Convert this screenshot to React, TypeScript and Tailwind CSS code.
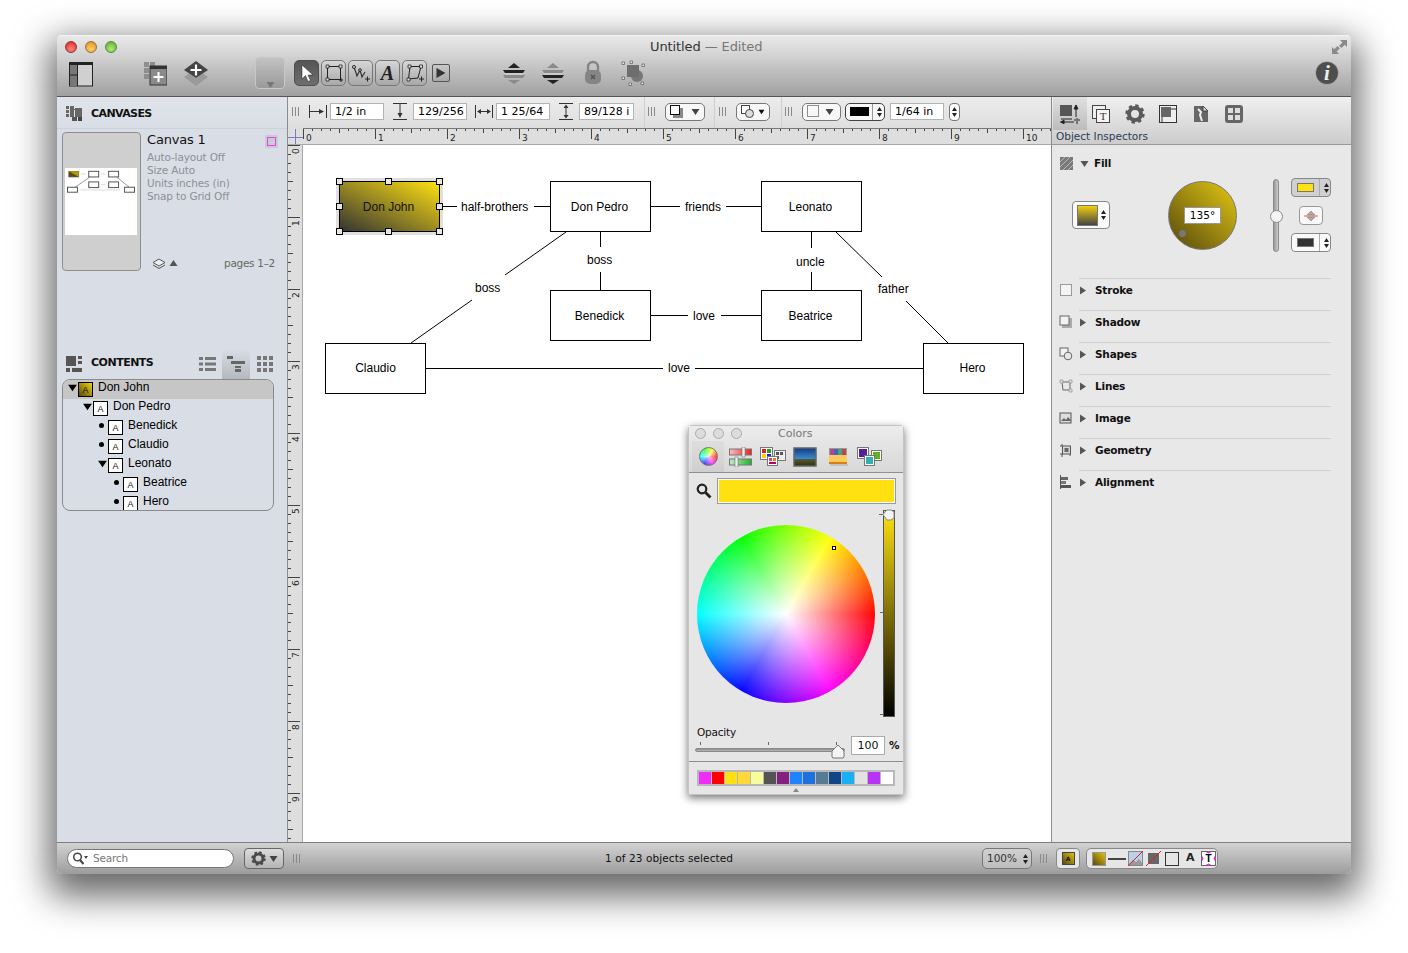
import React from "react";

const ui = "font-['DejaVu_Sans',sans-serif]";
const hv = "font-['Liberation_Sans',sans-serif]";

const Grip = ({ c = "" }: { c?: string }) => (
  <div className={`flex gap-[2px] h-[9px] ${c}`}>
    <i className="block w-px h-full bg-[#8a8a8a]" />
    <i className="block w-px h-full bg-[#8a8a8a]" />
    <i className="block w-px h-full bg-[#8a8a8a]" />
  </div>
);

const Field = ({ t, c = "" }: { t: string; c?: string }) => (
  <div className={`h-[17px] bg-white border border-[#b4b4b4] pl-[4px] text-[11px] leading-[15px] text-black overflow-hidden whitespace-nowrap ${c}`}>{t}</div>
);

const Tri = ({ c = "", d = "down", f = "#444" }: { c?: string; d?: "down" | "right" | "up"; f?: string }) => (
  <svg width="9" height="9" viewBox="0 0 9 9" className={`shrink-0 ${c}`}>
    <path d={d === "down" ? "M0.5 2h8l-4 6z" : d === "right" ? "M2 0.5v8l6-4z" : "M0.5 7h8l-4-6z"} fill={f} />
  </svg>
);

const Stepper = ({ c = "" }: { c?: string }) => (
  <svg width="7" height="12" viewBox="0 0 7 12" className={c}>
    <path d="M3.5 1l2.5 4h-5zM3.5 11l2.5-4h-5z" fill="#222" />
  </svg>
);

const Gear = ({ s = 16, f = "#4a4a4a" }: { s?: number; f?: string }) => (
  <svg width={s} height={s} viewBox="0 0 20 20">
    <circle cx="10" cy="10" r="8" fill="none" stroke={f} strokeWidth="3.4" strokeDasharray="3.2 3.08" />
    <circle cx="10" cy="10" r="6" fill="none" stroke={f} strokeWidth="4" />
  </svg>
);

const ToolBtn = ({ on, children }: { on?: boolean; children: React.ReactNode }) => (
  <div className={`w-[25px] h-[26px] rounded-[5px] border flex items-center justify-center ${on ? "border-[#4e4e4e] bg-[linear-gradient(#555,#6e6e6e)]" : "border-[#777] bg-[linear-gradient(#d6d6d6,#a8a8a8)]"}`}>
    {children}
  </div>
);

const Node = ({ t, c }: { t: string; c: string }) => (
  <div className={`absolute w-[101px] h-[51px] bg-white border border-black flex items-center justify-center pr-[2px] text-[12px] text-black ${c}`}>{t}</div>
);

const Lbl = ({ t, c }: { t: string; c: string }) => (
  <div className={`absolute text-[12px] leading-[14px] text-black whitespace-nowrap ${c}`}>{t}</div>
);

const Handle = ({ c }: { c: string }) => (
  <i className={`absolute block w-[7px] h-[7px] bg-[#e8e8e0] border border-black ${c}`} />
);

const TreeIcon = ({ on }: { on?: boolean }) => (
  <div className={`w-[15px] h-[15px] mt-[2px] border border-black flex items-center justify-center text-[9px] leading-none ${on ? "bg-[linear-gradient(to_top_right,#5a4a10,#f0d010)]" : "bg-white"}`}>
    <span className="mt-[2px]">A</span>
  </div>
);

const rows = [
  { t: "Don John", p: "pl-[4px]", k: "tri", on: true },
  { t: "Don Pedro", p: "pl-[19px]", k: "tri" },
  { t: "Benedick", p: "pl-[34px]", k: "dot" },
  { t: "Claudio", p: "pl-[34px]", k: "dot" },
  { t: "Leonato", p: "pl-[34px]", k: "tri" },
  { t: "Beatrice", p: "pl-[49px]", k: "dot" },
  { t: "Hero", p: "pl-[49px]", k: "dot" },
];

const sections: { t: string; i: React.ReactNode }[] = [
  { t: "Stroke", i: <rect x="1.5" y="1.5" width="11" height="11" fill="#f4f4f4" stroke="#444" strokeDasharray="1 1" /> },
  { t: "Shadow", i: <><rect x="3" y="3" width="10" height="10" fill="#aaa" /><rect x="1" y="1" width="9" height="9" fill="#f2f2f2" stroke="#666" /></> },
  { t: "Shapes", i: <><rect x="1" y="1" width="8" height="8" fill="#f2f2f2" stroke="#666" /><circle cx="9" cy="9" r="3.8" fill="#e8e8e8" stroke="#666" /></> },
  { t: "Lines", i: <><path d="M3 3h8v8H4z" fill="none" stroke="#666" /><path d="M1 1h3v3H1zM10 1h3v3h-3zM10 10h3v3h-3z" fill="#ddd" stroke="#888" strokeWidth=".6" /></> },
  { t: "Image", i: <><rect x="1" y="2" width="11" height="10" fill="#ddd" stroke="#555" /><path d="M2 10l3-3 2 2 2-3 3 3v1H2z" fill="#666" /></> },
  { t: "Geometry", i: <><rect x="3.5" y="3" width="8" height="8" fill="#d8d8d8" stroke="#555" /><rect x="5.5" y="5" width="4" height="4" fill="#666" /><path d="M1 3h2M3 1v2M1 11h3M3 11v3M11 11v2" stroke="#555" fill="none" /></> },
  { t: "Alignment", i: <><path d="M1.5 0v14" stroke="#555" /><rect x="2" y="2" width="7" height="3" fill="#666" /><rect x="2" y="6" width="5" height="3" fill="#777" /><rect x="2" y="10" width="10" height="3" fill="#555" /></> },
];

const swatches = ["bg-[#f02cf8]", "bg-[#ff0000]", "bg-[#ffe010]", "bg-[#ffd83a]", "bg-[#f7fd9b]", "bg-[#545454]", "bg-[#84207f]", "bg-[#1f84fb]", "bg-[#1c70e0]", "bg-[#567b92]", "bg-[#0e4688]", "bg-[#17b0f5]", "bg-[#e2e2e2]", "bg-[#b833f3]", "bg-white"];

export default function App() {
  return (
    <div className={`w-[1408px] h-[953px] bg-white pt-[35px] pl-[57px] overflow-hidden ${ui} text-[#111]`}>
      <div className="w-[1294px] h-[839px] rounded-[5px] shadow-[0_14px_36px_8px_rgba(0,0,0,0.6)] flex flex-col overflow-hidden">
        {/* Title + toolbar */}
        <header className="h-[62px] shrink-0 border-b border-[#555] bg-[linear-gradient(#e9e9e9,#d8d8d8_25%,#a0a0a0)] border-t border-t-[#f4f4f4]">
          <div className="h-[21px] flex items-center pl-[8px] pr-[4px]">
            <div className="flex gap-[8px]">
              <i className="block w-[12px] h-[12px] rounded-full border border-[#8a3a3a] bg-[radial-gradient(circle_at_50%_70%,#ff8a80,#d81a1a)]" />
              <i className="block w-[12px] h-[12px] rounded-full border border-[#98703a] bg-[radial-gradient(circle_at_50%_70%,#ffd070,#e08a10)]" />
              <i className="block w-[12px] h-[12px] rounded-full border border-[#5a8a3a] bg-[radial-gradient(circle_at_50%_70%,#b0e880,#58a820)]" />
            </div>
            <div className="ml-[533px] text-[13px] text-[#333] whitespace-nowrap mt-[1px] tracking-[-0.1px]">
              Untitled <span className="text-[#777]">— Edited</span>
            </div>
            <svg width="15" height="14" viewBox="0 0 15 14" className="ml-auto mt-[1px]">
              <path d="M15 0v7l-2.200-2.200-3.300 3.300-2.400-2.400 3.300-3.300L8 0zM0 14V7l2.200 2.200 3.300-3.300 2.400 2.400-3.300 3.300L7 14z" fill="#8a8a8a" />
            </svg>
          </div>
          <div className="h-[39px] flex items-start">
            <svg width="24" height="25" viewBox="0 0 24 25" className="ml-[12px] mt-[5px]">
              <rect x="0.500" y="1" width="23" height="23" fill="#d0d0d0" stroke="#222" />
              <rect x="0" y="0" width="24" height="3" fill="#222" />
              <rect x="1" y="3" width="7" height="20" fill="#777" />
              <path d="M8.500 3v21M1 13h7" stroke="#222" />
            </svg>
            <svg width="23" height="25" viewBox="0 0 23 25" className="ml-[51px] mt-[4px]">
              <path d="M0 1h5v5H0zM0 7h5v5H0zM0 13h5v5H0z" fill="#8e8e8e" />
              <rect x="6" y="1" width="5" height="5" fill="#8e8e8e" />
              <rect x="6" y="5" width="17" height="19" fill="#8a8a8a" stroke="#333" />
              <rect x="6" y="5" width="17" height="3" fill="#333" />
              <path d="M14.500 11v10M9.500 16h10" stroke="#fff" strokeWidth="2" />
            </svg>
            <svg width="26" height="27" viewBox="0 0 26 27" className="ml-[16px] mt-[3px]">
              <path d="M1 17l5-3.500 7 5 7-5 5 3.500-12 9z" fill="#9a9a9a" />
              <path d="M1 10L13 1l12 9-12 8z" fill="#444" />
              <path d="M13 4.500v11M7.500 10h11" stroke="#fff" strokeWidth="2.200" />
            </svg>
            <div className="ml-[46px] w-[30px] h-[32px] rounded-[4px] border border-[#c8c8c8] bg-[linear-gradient(#c2c2c2,#9a9a9a)] flex items-end justify-center">
              <Tri c="-mb-[1px]" f="#777" />
            </div>
            <div className="ml-[9px] mt-[3px] flex gap-[2px]">
              <ToolBtn on>
                <svg width="14" height="18" viewBox="0 0 14 18"><path d="M2 1v14l3.500-3.500 2.500 6 2.500-1-2.500-5.500h5z" fill="#fff" stroke="#222" strokeWidth=".5" /></svg>
              </ToolBtn>
              <ToolBtn>
                <svg width="20" height="20" viewBox="0 0 20 20"><rect x="3.500" y="3.500" width="13" height="13" fill="none" stroke="#222" /><path d="M2 2h3v3H2zM15 2h3v3h-3zM2 15h3v3H2z" fill="#ddd" stroke="#222" strokeWidth=".8" /><path d="M15 17h4M17 15v4" stroke="#222" /></svg>
              </ToolBtn>
              <ToolBtn>
                <svg width="20" height="20" viewBox="0 0 20 20"><path d="M3 4l3 9 3-6 2 7 3-5" fill="none" stroke="#333" strokeWidth="1.200" /><circle cx="3" cy="4" r="1.500" fill="#ddd" stroke="#222" /><circle cx="9" cy="7" r="1.300" fill="#ddd" stroke="#222" /><path d="M14 16h5M16.500 13.500v5" stroke="#222" /></svg>
              </ToolBtn>
              <ToolBtn>
                <span className="font-['Liberation_Serif',serif] italic font-bold text-[20px] leading-none text-[#222]">A</span>
              </ToolBtn>
              <ToolBtn>
                <svg width="20" height="20" viewBox="0 0 20 20"><path d="M5 3.500h11L13 15 3.500 16z" fill="none" stroke="#222" /><path d="M3 2h3v3H3zM14.500 2h3v3h-3zM2 15h3v3H2z" fill="#ddd" stroke="#222" strokeWidth=".8" /><path d="M14 16h5M16.500 13.500v5" stroke="#222" /></svg>
              </ToolBtn>
            </div>
            <div className="ml-[5px] mt-[7px] w-[18px] h-[18px] border border-[#555] rounded-[2px] bg-[linear-gradient(#c8c8c8,#a8a8a8)] flex items-center justify-center">
              <svg width="12" height="12" viewBox="0 0 12 12"><path d="M1.500 1v10l9-5z" fill="#333" /></svg>
            </div>
            <svg width="24" height="26" viewBox="0 0 24 26" className="ml-[52px] mt-[3px]">
              <path d="M12 3l6 5H6z" fill="#222" /><path d="M1 10h22l-2 3H3z" fill="#222" /><path d="M1 15h22l-2 3H3z" fill="#8a8a8a" /><path d="M2 13h20l-2 2H4z" fill="#ccc" /><path d="M6 20h12l-6 4z" fill="#8a8a8a" />
            </svg>
            <svg width="24" height="26" viewBox="0 0 24 26" className="ml-[15px] mt-[3px]">
              <path d="M12 3l6 5H6z" fill="#8a8a8a" /><path d="M1 10h22l-2 3H3z" fill="#8a8a8a" /><path d="M1 15h22l-2 3H3z" fill="#222" /><path d="M2 13h20l-2 2H4z" fill="#ccc" /><path d="M6 20h12l-6 4z" fill="#222" />
            </svg>
            <svg width="18" height="26" viewBox="0 0 18 26" className="ml-[19px] mt-[3px]">
              <path d="M4 11V7a5 5 0 0 1 10 0v4" fill="none" stroke="#858585" strokeWidth="2.400" />
              <rect x="1" y="10" width="16" height="14" rx="5" fill="#858585" />
              <path d="M7 15l4 4M11 15l-4 4" stroke="#555" strokeWidth="1.500" />
            </svg>
            <svg width="26" height="26" viewBox="0 0 26 26" className="ml-[18px] mt-[3px]">
              <circle cx="17" cy="16" r="6" fill="#777" /><rect x="7" y="5" width="12" height="12" fill="#6e6e6e" />
              <path d="M2 2h2.500v2.500H2zM10 1h2.500v2.500H10zM22 4h2.500v2.500H22zM2 17h2.500v2.500H2zM9 23h2.500v2.500H9zM21 22h2.500v2.500H21z" fill="#e8e8e8" stroke="#444" strokeWidth=".6" />
            </svg>
            <svg width="24" height="24" viewBox="0 0 24 24" className="ml-[669px] mt-[4px]">
              <circle cx="12" cy="12" r="11.500" fill="#4e4e4e" stroke="#ddd" strokeWidth=".5" />
              <text x="12" y="19" textAnchor="middle" fontFamily="Liberation Serif, serif" fontStyle="italic" fontWeight="700" fontSize="21" fill="#eee">i</text>
            </svg>
          </div>
        </header>

        <div className="flex-1 flex min-h-0">
          {/* Left sidebar */}
          <aside className="w-[231px] shrink-0 bg-[#d9dee6] border-r border-[#8c8c8c] flex flex-col">
            <div className="h-[32px] flex items-center pl-[9px] bg-[linear-gradient(#e0e4ea,#d9dee6)] border-b border-[#cdd2da]">
              <svg width="16" height="16" viewBox="0 0 16 16">
                <path d="M0 1h3v3H0zM0 5h3v3H0zM0 9h3v3H0z" fill="#666" /><rect x="4" y="1" width="4" height="11" fill="#666" /><rect x="9" y="3" width="7" height="9" fill="#666" /><rect x="8" y="4" width="1" height="1" fill="#666" /><rect x="6" y="12" width="5" height="4" fill="#555" /><rect x="12" y="12" width="4" height="4" fill="#444" />
              </svg>
              <span className="ml-[9px] text-[11px] font-bold text-[#111] tracking-[-0.6px] mt-[3px]">CANVASES</span>
            </div>
            <div className="h-[219px] flex pl-[5px] pt-[3px] relative">
              <div className="w-[79px] h-[139px] rounded-[4px] border border-[#8e8e8e] bg-[#cfcfcf] pt-[35px] pl-[2px]">
                <svg width="72" height="67" viewBox="0 0 216 202" className="bg-white block">
                  <rect x="11" y="10" width="30" height="17" fill="#5a4a10" stroke="#555" strokeWidth="2" />
                  <path d="M11 10h30v17z" fill="#b09a10" />
                  <g fill="#fff" stroke="#555" strokeWidth="3">
                    <rect x="71" y="10" width="30" height="17" /><rect x="131" y="10" width="30" height="17" /><rect x="71" y="42" width="30" height="17" /><rect x="131" y="42" width="30" height="17" /><rect x="7" y="58" width="30" height="15" /><rect x="179" y="58" width="30" height="15" />
                  </g>
                  <path d="M30 58l45-31M155 27l38 31" stroke="#666" strokeWidth="2" fill="none" />
                  <path d="M47 18h15M108 18h14M108 50h14M46 66h120" stroke="#ccc" strokeWidth="2" />
                </svg>
              </div>
              <div className="ml-[6px] flex-1">
                <div className="text-[13px] leading-[15px] text-[#111] tracking-[-0.2px]">Canvas 1</div>
                <div className="text-[10.500px] leading-[13px] text-[#8b9097] mt-[4px] whitespace-nowrap tracking-[-0.15px]">
                  <div>Auto-layout Off</div><div>Size Auto</div><div>Units inches (in)</div><div>Snap to Grid Off</div>
                </div>
                <div className="flex items-center mt-[53px] ml-[5px]">
                  <svg width="14" height="12" viewBox="0 0 14 12"><path d="M7 1l6 3.500-6 3.500-6-3.500z" fill="#eee" stroke="#555" /><path d="M1 7l6 3.500L13 7" fill="none" stroke="#555" /></svg>
                  <Tri d="up" c="ml-[3px]" f="#555" />
                  <span className="ml-auto mr-[12px] text-[10.500px] text-[#666] tracking-[-0.3px]">pages 1–2</span>
                </div>
              </div>
              <svg width="13" height="13" viewBox="0 0 13 13" className="absolute right-[9px] top-[6px]">
                <rect x="0" y="0" width="13" height="13" fill="#c8ccd4" />
                <rect x="2.500" y="2.500" width="8" height="8" fill="none" stroke="#f03cf0" />
              </svg>
            </div>
            <div className="h-[31px] flex items-center pl-[9px]">
              <svg width="16" height="16" viewBox="0 0 16 16">
                <rect x="0" y="0" width="10" height="10" fill="#555" /><rect x="12" y="0" width="4" height="3" fill="#555" /><rect x="12" y="5" width="4" height="3" fill="#555" /><rect x="0" y="12" width="4" height="4" fill="#555" /><rect x="6" y="12" width="10" height="4" fill="#555" />
              </svg>
              <span className="ml-[9px] text-[11px] font-bold text-[#111] tracking-[-0.5px]">CONTENTS</span>
              <svg width="17" height="16" viewBox="0 0 17 16" className="ml-[46px]">
                <path d="M0 1h4v3H0zM6 1h11v3H6zM0 6.500h4v3H0zM6 6.500h11v3H6zM0 12h4v3H0zM6 12h11v3H6z" fill="#777" />
              </svg>
              <div className="ml-[6px] w-[28px] h-[30px] flex items-center justify-center bg-[linear-gradient(#d9dee6,#b4b8bf)]">
                <svg width="18" height="16" viewBox="0 0 18 16"><path d="M0 0h6v3H0zM4 5h14v3H4zM8 10h6v2H8zM8 13h6v3H8z" fill="#666" /></svg>
              </div>
              <svg width="16" height="16" viewBox="0 0 16 16" className="ml-[7px]">
                <path d="M0 0h4v4H0zM6 0h4v4H6zM12 0h4v4h-4zM0 6h4v4H0zM6 6h4v4H6zM12 6h4v4h-4zM0 12h4v4H0zM6 12h4v4H6zM12 12h4v4h-4z" fill="#777" />
              </svg>
            </div>
            <div className={`mx-[5px] w-[212px] h-[132px] rounded-[8px] border border-[#8a8a8a] overflow-hidden ${hv} text-[12px]`}>
              {rows.map((r) => (
                <div key={r.t} className={`h-[19px] flex items-start ${r.p} ${r.on ? "bg-[#c6c6c6]" : ""}`}>
                  <div className="w-[11px] h-[15px] flex items-center justify-center">
                    {r.k === "tri" ? <Tri f="#000" c="scale-110 -ml-[1px]" /> : <i className="block w-[5px] h-[5px] rounded-full bg-black mr-[2px]" />}
                  </div>
                  <TreeIcon on={r.on} />
                  <span className="ml-[5px] leading-[15px] text-black">{r.t}</span>
                </div>
              ))}
            </div>
          </aside>

          {/* Centre */}
          <main className="w-[763px] shrink-0 flex flex-col">
            <div className="h-[31px] flex items-center bg-[linear-gradient(#ececec,#dedede)] text-[11px] pl-[4px] pb-[2px]">
              <Grip />
              <svg width="18" height="15" viewBox="0 0 18 15" className="ml-[10px]"><path d="M.5 1v13M1 7.500h12M17.500 1v13" stroke="#333" /><path d="M10 5l5 2.500-5 2.500z" fill="#333" /></svg>
              <Field t="1/2 in" c="ml-[3px] w-[54px]" />
              <svg width="18" height="17" viewBox="0 0 18 17" className="ml-[7px]"><path d="M2 .5h14M9 1v11M2 16.500h14" stroke="#333" /><path d="M6.500 10l2.500 5 2.500-5z" fill="#333" /></svg>
              <Field t="129/256" c="ml-[4px] w-[54px]" />
              <svg width="18" height="15" viewBox="0 0 18 15" className="ml-[8px]"><path d="M.5 1v13M17.500 1v13M3 7.500h12" stroke="#333" /><path d="M6 5L2 7.500 6 10zM12 5l4 2.500-4 2.500z" fill="#333" /></svg>
              <Field t="1 25/64" c="ml-[3px] w-[54px]" />
              <svg width="18" height="17" viewBox="0 0 18 17" className="ml-[7px]"><path d="M2 .5h14M2 16.500h14M9 3v11" stroke="#333" /><path d="M6.500 5L9 1.500 11.500 5zM6.500 12L9 15.500 11.500 12z" fill="#333" /></svg>
              <Field t="89/128 i" c="ml-[4px] w-[55px]" />
              <i className="block ml-[10px] w-px self-stretch -mb-[2px] bg-[#cfcfcf]" />
              <Grip c="ml-[3px]" />
              <div className="ml-[10px] w-[40px] h-[18px] rounded-[5px] border border-[#777] bg-white/70 flex items-center pl-[4px]">
                <svg width="13" height="13" viewBox="0 0 13 13"><rect x="3" y="3" width="10" height="10" fill="#888" /><rect x=".5" y=".5" width="9" height="9" fill="#fff" stroke="#111" /></svg>
                <Tri c="ml-[8px]" />
              </div>
              <i className="block ml-[9px] w-px self-stretch -mb-[2px] bg-[#cfcfcf]" />
              <Grip c="ml-[4px]" />
              <div className="ml-[10px] w-[34px] h-[18px] rounded-[5px] border border-[#777] bg-white/70 flex items-center pl-[4px]">
                <svg width="13" height="13" viewBox="0 0 13 13"><rect x=".5" y=".5" width="8" height="8" fill="#fff" stroke="#444" /><circle cx="8.500" cy="8.500" r="4" fill="#ddd" stroke="#444" /></svg>
                <Tri c="ml-[3px] scale-75" f="#111" />
              </div>
              <i className="block ml-[11px] w-px self-stretch -mb-[2px] bg-[#cfcfcf]" />
              <Grip c="ml-[3px]" />
              <div className="ml-[10px] w-[39px] h-[18px] rounded-[5px] border border-[#777] bg-white/70 flex items-center pl-[4px]">
                <svg width="13" height="13" viewBox="0 0 13 13"><rect x=".5" y=".5" width="11" height="11" fill="none" stroke="#222" strokeDasharray="1 1" /></svg>
                <Tri c="ml-[5px]" />
              </div>
              <div className="ml-[4px] w-[40px] h-[18px] rounded-[5px] border border-[#444] bg-white/70 flex items-center pl-[4px]">
                <i className="block w-[19px] h-[9px] bg-black" />
                <i className="block w-px h-full bg-[#999] ml-[3px]" />
                <Stepper c="ml-[3px]" />
              </div>
              <Field t="1/64 in" c="ml-[5px] w-[54px]" />
              <div className="ml-[5px] w-[11px] h-[18px] rounded-[4px] border border-[#777] bg-white flex items-center justify-center">
                <Stepper />
              </div>
            </div>
            <div className="h-[17px] flex">
              <div className="w-[15px] bg-[#dedede] border-b border-[#aaa]">
                <svg width="15" height="16" viewBox="0 0 15 16" className="block"><path d="M0 9.500h15M7.500 1v15" stroke="#7a7ac0" /></svg>
              </div>
              <svg width="748" height="17" viewBox="0 0 748 17" className="block bg-[#dedede]">
                <path d="M0 .5h748" stroke="#777" />
                <path d="M0 16.500h748" stroke="#a8a8a8" />
                {Array.from({ length: 84 }).map((_, i) => (
                  <path key={i} d={`M${i * 9 + 0.5} 1v${i % 8 === 0 ? 10 : i % 4 === 0 ? 4 : 2}`} stroke="#444" />
                ))}
                {Array.from({ length: 11 }).map((_, i) => (
                  <text key={i} x={i * 72 + 3} y="13" fontSize="9" fontFamily="DejaVu Sans, sans-serif" fill="#222">{i}</text>
                ))}
              </svg>
            </div>
            <div className="flex-1 flex min-h-0">
              <svg width="15" height="697" viewBox="0 0 15 697" className="block bg-[#dedede] shrink-0">
                <path d="M14.500 0v697" stroke="#a8a8a8" />
                {Array.from({ length: 78 }).map((_, i) => (
                  <path key={i} d={`M0 ${i * 9 + 0.5}h${i % 8 === 0 ? 12 : i % 4 === 0 ? 5 : 3}`} stroke="#444" />
                ))}
                {Array.from({ length: 10 }).map((_, i) => (
                  <text key={i} transform={`translate(11 ${i * 72 + 9}) rotate(-90)`} fontSize="9" fontFamily="DejaVu Sans, sans-serif" fill="#222">{i}</text>
                ))}
              </svg>
              <div className={`relative flex-1 bg-white ${hv}`}>
                <svg width="748" height="300" viewBox="303 145 748 300" className="absolute left-0 top-0">
                  <g stroke="#000" strokeWidth="1" fill="none">
                    <path d="M441 206.500h16M534 206.500h16M651 206.500h29M726 206.500h35M600.500 232v15M600.500 272v18M811.500 232v16M811.500 272v18M651 315.500h37M721 315.500h40M426 368.500h237M695 368.500h228" />
                    <path d="M566 232L505 275M472 300L411 343M836 232L882 277M906 301L948 343" />
                  </g>
                </svg>

                <div className="absolute left-[33px] top-[33px] w-[107px] h-[57px] bg-[#e0e0e0]" />
                <div className="absolute left-[36px] top-[36px] w-[101px] h-[51px] border border-black bg-[linear-gradient(to_top_right,#333333,#ffe010)] flex items-center justify-center pr-[2px] text-[12px] text-[#111]">
                  Don John
                  <Handle c="-left-[4px] -top-[4px]" />
                  <Handle c="left-[45px] -top-[4px]" />
                  <Handle c="-right-[4px] -top-[4px]" />
                  <Handle c="-left-[4px] top-[21px]" />
                  <Handle c="-right-[4px] top-[21px]" />
                  <Handle c="-left-[4px] -bottom-[4px]" />
                  <Handle c="left-[45px] -bottom-[4px]" />
                  <Handle c="-right-[4px] -bottom-[4px]" />
                </div>
                <Node t="Don Pedro" c="left-[247px] top-[36px]" />
                <Node t="Leonato" c="left-[458px] top-[36px]" />
                <Node t="Benedick" c="left-[247px] top-[145px]" />
                <Node t="Beatrice" c="left-[458px] top-[145px]" />
                <Node t="Claudio" c="left-[22px] top-[198px] pb-[2px] pl-[2px]" />
                <Node t="Hero" c="left-[620px] top-[198px] pb-[2px]" />
                <Lbl t="half-brothers" c="left-[158px] top-[55px]" />
                <Lbl t="friends" c="left-[382px] top-[55px]" />
                <Lbl t="boss" c="left-[284px] top-[108px]" />
                <Lbl t="uncle" c="left-[493px] top-[110px]" />
                <Lbl t="boss" c="left-[172px] top-[136px]" />
                <Lbl t="father" c="left-[575px] top-[137px]" />
                <Lbl t="love" c="left-[390px] top-[164px]" />
                <Lbl t="love" c="left-[365px] top-[216px]" />

                {/* Colors panel */}
                <div className={`absolute left-[385px] top-[280px] w-[216px] h-[370px] bg-[#e6e6e6] border border-[#c4c4c4] rounded-t-[4px] shadow-[0_3px_8px_rgba(0,0,0,0.55)] flex flex-col ${ui}`}>
                  <div className="h-[47px] shrink-0 border-b border-[#8f8f8f] bg-[linear-gradient(#ececec,#d8d8d8)]">
                    <div className="h-[15px] flex items-center pl-[6px]">
                      <div className="flex gap-[7px]">
                        <i className="block w-[11px] h-[11px] rounded-full border border-[#aaa] bg-[#dcdcdc]" />
                        <i className="block w-[11px] h-[11px] rounded-full border border-[#aaa] bg-[#dcdcdc]" />
                        <i className="block w-[11px] h-[11px] rounded-full border border-[#aaa] bg-[#dcdcdc]" />
                      </div>
                      <span className="ml-[36px] text-[11px] text-[#777] mt-[1px]">Colors</span>
                    </div>
                    <div className="flex items-center h-[31px]">
                      <div className="ml-[3px] w-[32px] h-[31px] flex items-center justify-center bg-[linear-gradient(#dedede,#cfcfcf)]">
                        <i className="block w-[19px] h-[19px] rounded-full border border-[#777] bg-[radial-gradient(circle,#ffffffcc,#ffffff00),conic-gradient(from_30deg,#ff0,#f00,#f0f,#00f,#0ff,#0f0,#ff0)]" />
                      </div>
                      <svg width="24" height="20" viewBox="0 0 24 20" className="ml-[5px]">
                        <defs>
                          <linearGradient id="rd"><stop offset="0" stopColor="#f8c0c0" /><stop offset="1" stopColor="#e82020" /></linearGradient>
                          <linearGradient id="gn"><stop offset="0" stopColor="#c0ecc0" /><stop offset="1" stopColor="#20b030" /></linearGradient>
                        </defs>
                        <rect x=".5" y="2" width="22" height="6" fill="url(#rd)" stroke="#777" /><rect x=".5" y="12" width="22" height="6" fill="url(#gn)" stroke="#777" />
                        <rect x="13" y="0" width="3" height="10" fill="#eee" stroke="#666" strokeWidth=".5" /><rect x="6" y="10" width="3" height="10" fill="#eee" stroke="#666" strokeWidth=".5" />
                      </svg>
                      <svg width="26" height="19" viewBox="0 0 26 19" className="ml-[7px]">
                        <rect x=".5" y=".5" width="12" height="12" fill="#fff" stroke="#777" /><path d="M2 2h4v4H2z" fill="#e02020" /><path d="M7 2h4v4H7z" fill="#20a020" /><path d="M2 7h4v4H2z" fill="#f0d010" /><path d="M7 7h4v4H7z" fill="#2020e0" />
                        <rect x="14.500" y="3.500" width="11" height="10" fill="#eee" stroke="#777" /><path d="M16 5h3v3h-3zM20 5h3v3h-3zM16 9h3v3h-3z" fill="#555" />
                        <rect x="7.500" y="9.500" width="10" height="9" fill="#fff" stroke="#777" /><path d="M9 11h3v3H9z" fill="#e04080" /><path d="M13 11h3v3h-3z" fill="#f08000" /><path d="M9 15h7v2H9z" fill="#c00060" />
                      </svg>
                      <svg width="24" height="20" viewBox="0 0 24 20" className="ml-[7px]">
                        <defs><linearGradient id="sky" x1="0" y1="0" x2="0" y2="1"><stop offset="0" stopColor="#123a80" /><stop offset="0.6" stopColor="#3a8ad0" /><stop offset="0.62" stopColor="#5a5a30" /><stop offset="1" stopColor="#2a3010" /></linearGradient></defs>
                        <rect x="1" y="1" width="22" height="18" fill="url(#sky)" stroke="#666" strokeWidth="1.500" />
                      </svg>
                      <svg width="20" height="20" viewBox="0 0 20 20" className="ml-[11px]">
                        <rect x="1" y="1" width="18" height="8" fill="#999" /><path d="M3 2v7M5 2v7" stroke="#b03090" strokeWidth="1.500" /><path d="M7 2v7M9 2v7" stroke="#3050c0" strokeWidth="1.500" /><path d="M11 2v7M13 2v7" stroke="#30a080" strokeWidth="1.500" /><path d="M15 2v7M17 2v7" stroke="#c03030" strokeWidth="1.500" />
                        <path d="M1 8h18v9H1z" fill="#fcc860" /><path d="M1 15h18v2H1z" fill="#d88010" /><path d="M2 18h18" stroke="#aaa" />
                      </svg>
                      <svg width="25" height="19" viewBox="0 0 25 19" className="ml-[9px]">
                        <rect x=".5" y=".5" width="11" height="11" fill="#fff" stroke="#777" /><rect x="2" y="2" width="8" height="8" fill="#5020a0" />
                        <rect x="14.500" y="3.500" width="10" height="10" fill="#fff" stroke="#777" /><rect x="16" y="5" width="7" height="7" fill="#60b020" />
                        <rect x="7.500" y="8.500" width="10" height="10" fill="#fff" stroke="#777" /><rect x="9" y="10" width="7" height="7" fill="#30b0b0" />
                      </svg>
                    </div>
                  </div>
                  <div className="flex items-start mt-[5px] pl-[7px]">
                    <svg width="16" height="16" viewBox="0 0 16 16" className="mt-[5px]"><circle cx="6" cy="6" r="4.300" fill="none" stroke="#222" strokeWidth="2.200" /><path d="M9.500 9.500l5 5" stroke="#222" strokeWidth="2.800" /></svg>
                    <div className="ml-[5px] w-[179px] h-[26px] bg-[#ffe010] border border-[#999] shadow-[inset_0_0_0_1px_#fff]" />
                  </div>
                  <div className="flex mt-[6px] pl-[8px] h-[211px]">
                    <div className="w-[178px] h-[178px] mt-[15px] rounded-full relative bg-[radial-gradient(circle,#ffffff,#ffffff00_72%),conic-gradient(from_30deg,#ffff00,#ff0000,#ff00ff,#0000ff,#00ffff,#00ff00,#ffff00)]">
                      <i className="absolute left-[135px] top-[21px] block w-[4px] h-[4px] bg-white border border-black" />
                    </div>
                    <div className="ml-[8px] w-[12px] h-[207px] border border-[#555] bg-[linear-gradient(#ffe010,#000)] relative">
                      <svg width="16" height="12" viewBox="0 0 16 12" className="absolute -left-[5px] -top-[2px]"><path d="M0 5.500h4" stroke="#666" /><path d="M4 5.500L8 1h4l3 2v6l-3 2H8z" fill="#f4f4f4" stroke="#888" /></svg>
                      <i className="absolute -left-[4px] top-[101px] block w-[3px] h-px bg-[#666]" />
                      <i className="absolute -left-[4px] bottom-[1px] block w-[3px] h-px bg-[#666]" />
                    </div>
                  </div>
                  <div className="pl-[8px] text-[10.500px] leading-[13px] mt-[5px] tracking-[-0.2px]">Opacity</div>
                  <div className="flex items-start pl-[6px] h-[21px]">
                    <div className="w-[150px] relative mt-[6px]">
                      <i className="absolute left-[5px] -top-[3px] block w-px h-[3px] bg-[#666]" />
                      <i className="absolute left-[73px] -top-[3px] block w-px h-[3px] bg-[#666]" />
                      <i className="absolute left-[141px] -top-[3px] block w-px h-[3px] bg-[#666]" />
                      <div className="h-[4px] mt-[3px] rounded-full bg-[linear-gradient(#888,#bbb)] border border-[#8a8a8a]" />
                      <svg width="14" height="15" viewBox="0 0 14 15" className="absolute left-[136px] -top-[1px]"><path d="M7 1l6 6v6l-1 1H2l-1-1V7z" fill="#f4f4f4" stroke="#777" /></svg>
                    </div>
                    <div className="ml-[6px] -mt-[3px] w-[34px] h-[19px] bg-white border border-[#aaa] text-[11px] leading-[17px] text-center">100</div>
                    <span className="ml-[4px] text-[10.500px] leading-[13px] font-bold">%</span>
                  </div>
                  <div className="border-t border-[#8f8f8f] mt-[1px] pt-[8px] pl-[8px]">
                    <div className="w-[198px] h-[16px] bg-[#b8b8b8] px-[2px] py-[2px] flex gap-[1px]">
                      {swatches.map((s) => (
                        <i key={s} className={`block w-[12.200px] h-[12px] ${s}`} />
                      ))}
                    </div>
                  </div>
                  <svg width="6" height="4" viewBox="0 0 6 4" className="mx-auto mt-[2px]"><path d="M3 0l3 4H0z" fill="#888" /></svg>
                </div>
              </div>
            </div>
          </main>

          {/* Right inspector */}
          <aside className="w-[300px] shrink-0 bg-[#e8e8e8] border-l border-[#8c8c8c] flex flex-col">
            <div className="h-[48px] shrink-0 border-b border-[#999] bg-[linear-gradient(#f0f0f0,#cccccc)]">
              <div className="flex h-[33px] items-center pl-[1px]">
                <div className="w-[34px] h-[33px] flex items-center justify-center bg-[linear-gradient(#e0e0e0,#bcbcbc)]">
                  <svg width="20" height="20" viewBox="0 0 20 20"><rect x="0" y="1" width="12" height="11" fill="#555" /><path d="M1 15h11M16 1v12M0 18h14M17 14v6" stroke="#222" /><path d="M14 5l2-4 2 4zM1 18l3-2v4zM14 16h2M18 16h2" fill="#222" stroke="#222" /></svg>
                </div>
                <svg width="18" height="18" viewBox="0 0 18 18" className="ml-[5px]"><rect x=".5" y=".5" width="13" height="13" fill="#eee" stroke="#444" /><rect x="4.500" y="4.500" width="13" height="13" fill="#f4f4f4" stroke="#444" /><text x="11" y="15" textAnchor="middle" fontSize="11" fontFamily="Liberation Serif, serif" fill="#333">T</text></svg>
                <span className="ml-[15px] block"><Gear s={20} f="#5a5a5a" /></span>
                <svg width="18" height="18" viewBox="0 0 18 18" className="ml-[14px]"><rect x=".5" y=".5" width="17" height="17" fill="#eee" stroke="#333" /><rect x="2" y="2" width="10" height="10" fill="#666" /><path d="M12 4h5M3 12v5" stroke="#333" /></svg>
                <svg width="16" height="18" viewBox="0 0 16 18" className="ml-[16px]"><path d="M1 1h9l5 5v11H1z" fill="#666" /><path d="M10 1v5h5z" fill="#ddd" stroke="#444" /><path d="M5 4l3 3-1 3 2 6" stroke="#eee" strokeWidth="2" fill="none" /></svg>
                <div className="ml-[16px] w-[18px] h-[18px] rounded-[3px] bg-[#666] grid grid-cols-2 gap-[2px] p-[3px]">
                  <i className="block bg-[#ddd]" /><i className="block bg-[#ddd]" /><i className="block bg-[#ddd]" /><i className="block bg-[#ddd]" />
                </div>
              </div>
              <div className="text-[10.500px] leading-[12px] pl-[4px] text-[#2d3a55] whitespace-nowrap">Object Inspectors</div>
            </div>
            <div className="h-[133px] shrink-0 pt-[11px]">
              <div className="flex items-center h-[14px] pl-[8px]">
                <svg width="13" height="13" viewBox="0 0 13 13"><rect width="13" height="13" fill="#7a7a7a" /><path d="M0 5L5 0M0 10L10 0M3 13L13 3M8 13l5-5" stroke="#bbb" /></svg>
                <Tri c="ml-[7px]" f="#555" />
                <span className="ml-[5px] mt-[2px] text-[10.500px] font-bold text-[#111] tracking-[-0.2px]">Fill</span>
              </div>
              <div className="flex items-center h-[74px] mt-[8px]">
                <div className="ml-[20px] w-[38px] h-[28px] rounded-[4px] border border-[#888] bg-white/80 flex items-center pl-[4px]">
                  <i className="block w-[21px] h-[21px] border border-[#777] bg-[linear-gradient(#f0d010,#444)]" />
                  <Stepper c="ml-[2px]" />
                </div>
                <div className="ml-[58px] w-[69px] h-[69px] rounded-full border border-[#777] bg-[linear-gradient(to_top_right,#54470f,#e4c812)] relative flex items-center justify-center">
                  <div className="w-[37px] h-[17px] bg-white border border-[#999] text-[10.500px] leading-[15px] text-center text-black">135°</div>
                  <i className="absolute left-[10px] top-[48px] block w-[7px] h-[7px] rounded-full bg-[#777]" />
                </div>
                <div className="ml-[36px] w-[6px] h-[73px] rounded-full bg-[linear-gradient(to_right,#999,#ccc)] border border-[#8a8a8a] relative">
                  <i className="absolute -left-[4px] top-[30px] block w-[13px] h-[13px] rounded-full bg-[#f4f4f4] border border-[#888]" />
                </div>
                <div className="ml-[12px] flex flex-col items-center">
                  <div className="w-[40px] h-[19px] rounded-[4px] border border-[#888] bg-[#d0d0d0] flex items-center pl-[5px]">
                    <i className="block w-[17px] h-[9px] bg-[#ffe010] border border-[#777]" />
                    <i className="block ml-[5px] w-px h-full bg-[#aaa]" />
                    <Stepper c="ml-[3px]" />
                  </div>
                  <div className="mt-[9px] w-[24px] h-[19px] rounded-[4px] border border-[#999] bg-white/70 flex items-center justify-center">
                    <svg width="14" height="12" viewBox="0 0 14 12"><path d="M7 1l4 4H3zM7 11l4-4H3z" fill="#aaa" stroke="#777" strokeWidth=".5" /><path d="M0 6h14" stroke="#e05050" /></svg>
                  </div>
                  <div className="mt-[8px] w-[40px] h-[19px] rounded-[4px] border border-[#888] bg-white/80 flex items-center pl-[5px]">
                    <i className="block w-[17px] h-[9px] bg-[#333] border border-[#777]" />
                    <i className="block ml-[5px] w-px h-full bg-[#aaa]" />
                    <Stepper c="ml-[3px]" />
                  </div>
                </div>
              </div>
            </div>
            {sections.map((s) => (
              <div key={s.t} className="h-[32px] flex pl-[7px]">
                <svg width="15" height="15" viewBox="0 0 15 15" className="mt-[5px]">{s.i}</svg>
                <div className="ml-[5px] mr-[20px] flex-1 border-t border-[#d0d0d0] flex items-center h-[24px]">
                  <Tri d="right" c="-ml-[1px]" f="#555" />
                  <span className="ml-[8px] text-[10.500px] font-bold text-[#111] tracking-[-0.2px]">{s.t}</span>
                </div>
              </div>
            ))}
          </aside>
        </div>

        {/* Status bar */}
        <footer className="h-[32px] shrink-0 border-t border-[#7e7e7e] bg-[linear-gradient(#d2d2d2,#9c9c9c)] flex items-center">
          <div className="ml-[10px] w-[167px] h-[19px] rounded-full border border-[#777] bg-white flex items-center pl-[4px]">
            <svg width="17" height="13" viewBox="0 0 17 13"><circle cx="5.500" cy="5" r="3.800" fill="none" stroke="#444" strokeWidth="1.500" /><path d="M8 8l3.500 4" stroke="#444" strokeWidth="2" /><path d="M12 4h4l-2 3z" fill="#444" /></svg>
            <span className="ml-[4px] text-[10.500px] text-[#777] tracking-[-0.2px]">Search</span>
          </div>
          <div className="ml-[10px] w-[40px] h-[21px] rounded-[4px] border border-[#666] bg-[linear-gradient(#dcdcdc,#b4b4b4)] flex items-center pl-[6px]">
            <Gear s={15} />
            <Tri c="ml-[3px]" />
          </div>
          <Grip c="ml-[9px]" />
          <span className="ml-[305px] text-[10.500px] text-[#111] mt-[1px] tracking-[0.1px] whitespace-nowrap">1 of 23 objects selected</span>
          <div className="ml-auto w-[50px] h-[21px] rounded-[5px] border border-[#777] bg-[linear-gradient(#d0d0d0,#bdbdbd)] flex items-center pl-[4px]">
            <span className="text-[10.500px] text-[#333]">100%</span>
            <Stepper c="ml-[5px]" />
          </div>
          <Grip c="ml-[8px]" />
          <div className="ml-[9px] w-[24px] h-[21px] rounded-[4px] bg-[#e6e6e6] border border-[#888] flex items-center justify-center">
            <div className="w-[13px] h-[13px] border border-[#444] bg-[linear-gradient(to_top_right,#5a4a10,#e0c010)] text-[6px] leading-[11px] text-center font-bold">A</div>
          </div>
          <div className="ml-[6px] mr-[133px] w-[132px] h-[21px] rounded-[5px] bg-[#e6e6e6] border border-[#888] flex items-center pl-[5px]">
            <i className="block w-[14px] h-[14px] bg-[linear-gradient(to_top_right,#5a4a10,#e0c010)] border border-[#999]" />
            <i className="block ml-[2px] w-[18px] h-[2px] bg-[#444]" />
            <svg width="15" height="15" viewBox="0 0 15 15" className="ml-[2px]"><rect x=".5" y=".5" width="14" height="14" fill="#b8d0e8" stroke="#888" /><path d="M1 13l4-4 3 2 3-3 3 4v2H1z" fill="#999" /><path d="M0 15L15 0" stroke="#e02020" /></svg>
            <svg width="15" height="15" viewBox="0 0 15 15" className="ml-[3px]"><rect x="2" y="2" width="11" height="11" fill="#666" /><path d="M0 15L15 0" stroke="#e02020" /></svg>
            <i className="block ml-[4px] w-[14px] h-[14px] border-[1.500px] border-[#333] bg-[#e6e6e6]" />
            <span className="ml-[7px] text-[11px] text-[#222] font-bold">A</span>
            <svg width="15" height="15" viewBox="0 0 15 15" className="ml-[6px]">
              <rect x=".5" y=".5" width="14" height="14" fill="#fff" stroke="#666" />
              <text x="7.500" y="11" textAnchor="middle" fontSize="10" fontWeight="700" fontFamily="Liberation Sans, sans-serif" fill="#000">T</text>
              <path d="M7.500 0v2.500M5.500 1.500h4M7.500 12.500V15M5.500 13.500h4M0 7.500h2.500M1.500 5.500v4M12.500 7.500H15M13.500 5.500v4" stroke="#f030e0" />
            </svg>
          </div>
        </footer>
      </div>
    </div>
  );
}
